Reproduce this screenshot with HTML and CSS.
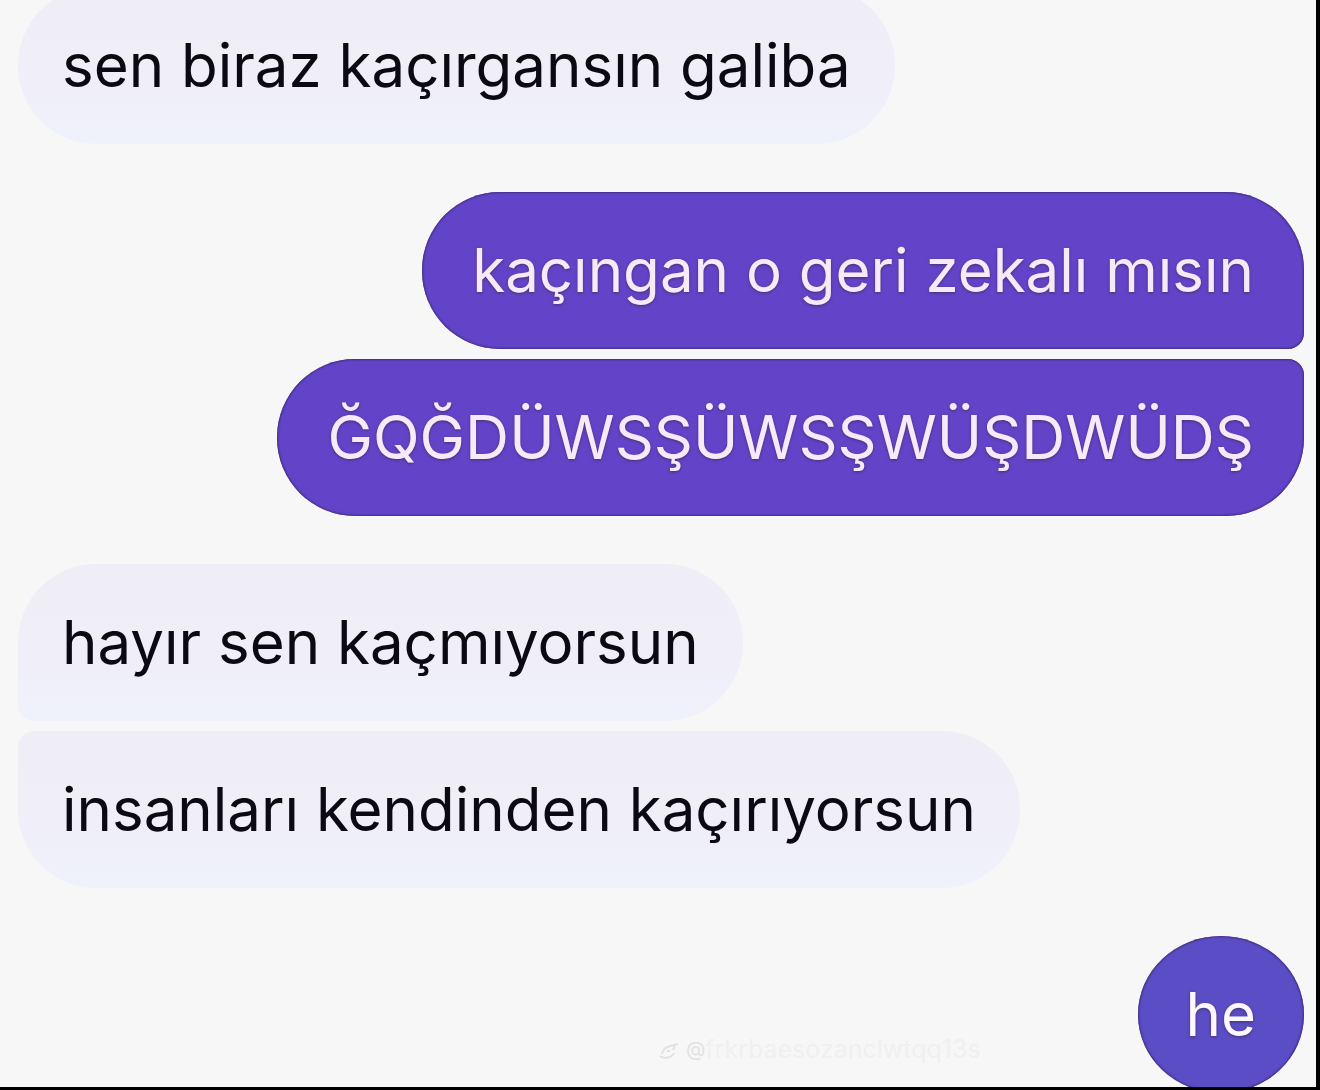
FILE: index.html
```
<!DOCTYPE html>
<html lang="tr">
<head>
<meta charset="utf-8">
<title>Sohbet</title>
<link rel="stylesheet" href="styles.css">
</head>
<body>
<main class="chat">
  <div class="group received">
    <p class="bubble">sen biraz kaçırgansın galiba</p>
  </div>
  <div class="group sent">
    <p class="bubble">kaçıngan o geri zekalı mısın</p>
    <p class="bubble caps">ĞQĞDÜWSŞÜWSŞWÜŞDWÜDŞ</p>
  </div>
  <div class="group received">
    <p class="bubble">hayır sen kaçmıyorsun</p>
    <p class="bubble">insanları kendinden kaçırıyorsun</p>
  </div>
  <div class="group sent">
    <p class="bubble short">he</p>
  </div>
  <div class="watermark">
    <svg width="24" height="24" viewBox="0 0 24 24" fill="none" stroke="currentColor" stroke-width="2">
      <path d="M2 19c4 3 12 2 14-3M4 17c1-5 4-7 8-8l8-2M9 14h3M17 8l-2 5"/>
    </svg>
    <span class="at">@</span><span class="handle">frkrbaesozanclwtqq13s</span>
  </div>
</main>
</body>
</html>
```
FILE: styles.css
```
* {
  box-sizing: border-box;
}

body {
  margin: 0;
  background: #f7f7f7;
  font-family: Inter, "Liberation Sans", sans-serif;
  font-size: 60px;
  line-height: 73px;
}

.chat {
  position: relative;
  display: flex;
  flex-direction: column;
  gap: 48px;
  height: 100vh;
  padding: 0 12px 0 18px;
  border-right: 4px solid #000;
  border-bottom: 3px solid #000;
  overflow: hidden;
}

.group {
  display: flex;
  flex-direction: column;
  flex-shrink: 0;
  gap: 10px;
}

/* the oldest message is partly scrolled out of view */
.group:first-child {
  margin-top: -13px;
}

.received {
  align-items: flex-start;
}

.sent {
  align-items: flex-end;
}

.bubble {
  margin: 0;
  padding: 42px 50px;
  border-radius: 78px;
  white-space: nowrap;
}

.received .bubble {
  padding: 42px 44px;
  background: linear-gradient(#efeef7, #f0eef8 60%, #eff2fb);
  color: #0b0a14;
}

.sent .bubble {
  background: #6244c8;
  box-shadow: inset 0 0 2px 1px #432c80;
  color: #f6e9f8;
  text-shadow: 0 1px 3px #453070;
}

.sent .caps {
  font-size: 61px;
}

.sent .short {
  padding: 42px 48px;
  border-radius: 50%;
  background: #5b4dc5;
  color: #fbf7fd;
}

.received .bubble:not(:last-child) {
  border-bottom-left-radius: 16px;
}

.received .bubble:not(:first-child) {
  border-top-left-radius: 16px;
}

.sent .bubble:not(:last-child) {
  border-bottom-right-radius: 16px;
}

.sent .bubble:not(:first-child) {
  border-top-right-radius: 16px;
}

.watermark {
  position: absolute;
  left: 50%;
  bottom: 24px;
  display: flex;
  align-items: center;
  color: #e2e2e2;
  font-size: 25px;
  line-height: 28px;
}

.at {
  margin-left: 4px;
  font-size: 20px;
}

.handle {
  color: #f0f0f0;
}
```
